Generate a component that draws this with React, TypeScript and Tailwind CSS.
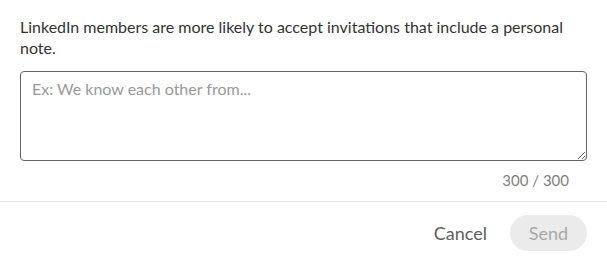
import React from "react";

export default function App() {
  return (
    <div className="w-[607px] h-[261px] bg-white font-['Lato','Open_Sans',sans-serif] text-[#333]">
      <div className="px-5 pt-[16px]">
        <p className="text-[16px] leading-[21px] text-[#333]">
          LinkedIn members are more likely to accept invitations that include a personal note.
        </p>
        <textarea
          className="mt-[13px] block w-full h-[90px] border border-[#666] rounded-[4px] pl-[11px] pr-2 py-[6px] text-[16px] leading-[21px] outline-none placeholder:text-[#999] resize-y"
          placeholder="Ex: We know each other from..."
        />
        <div className="mt-[9px] pr-[18px] text-right text-[15px] leading-[21px] text-[#808080]">
          300 / 300
        </div>
      </div>
      <div className="mt-[10px] border-t border-[#e8e8e8] flex justify-end items-center gap-[23px] pl-5 pr-[20px] pt-[13px]">
        <button className="text-[18px] font-normal text-[#5e5e5e] leading-[36px]">Cancel</button>
        <button className="h-[36px] w-[77px] rounded-full bg-[#ebebeb] text-[18px] font-normal text-[#a8a8a8]">
          Send
        </button>
      </div>
    </div>
  );
}
